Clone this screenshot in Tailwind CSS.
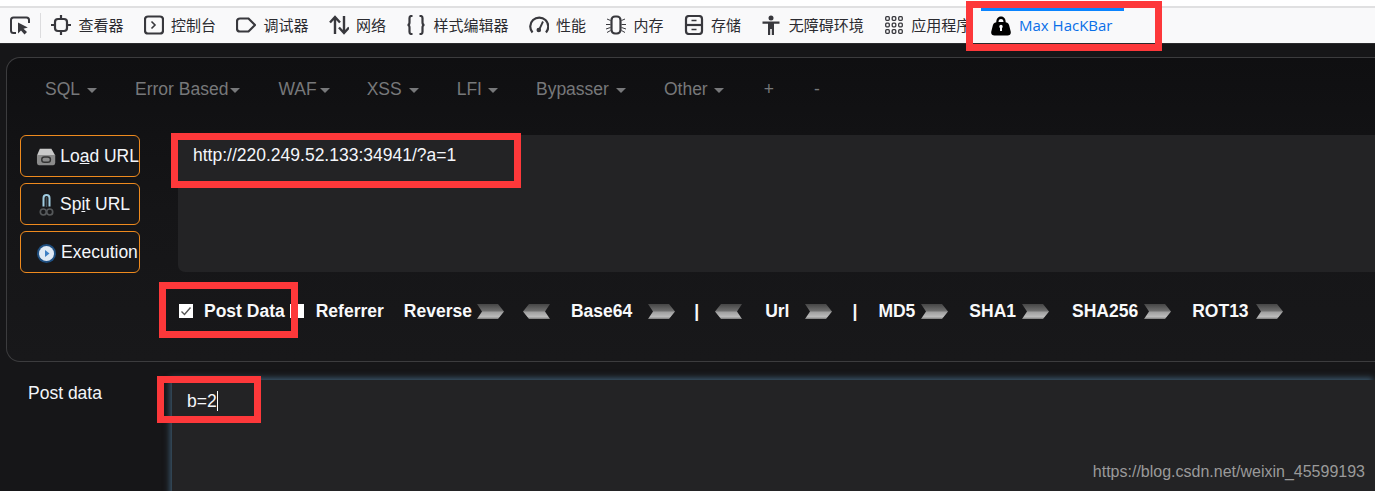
<!DOCTYPE html>
<html>
<head>
<meta charset="utf-8">
<script src="https://cdn.jsdelivr.net/npm/@tailwindcss/browser@4"></script>
</head>
<body class="m-0 overflow-hidden">
<div class="relative w-[1375px] h-[491px] overflow-hidden bg-[#161618] font-['Liberation_Sans','Noto_Sans_CJK_SC',sans-serif]">

  <!-- devtools toolbar -->
  <div class="h-[6px] bg-white"></div>
  <div class="h-[2px] bg-[#e0e0e1]"></div>
  <div class="relative flex h-[35px] items-center bg-[#f9f9fa] pb-[1px] text-[15px] text-[#2b2b30] font-['Noto_Sans_CJK_SC','Noto_Sans',sans-serif]">
    <svg class="ml-[10px] w-[20px] h-[20px] shrink-0" viewBox="0 0 20 20" fill="none" stroke="#38383d" stroke-width="2"><path d="M6 18H3.500Q1 18 1 15.500V5Q1 2.500 3.500 2.500H16.500Q19 2.500 19 5V8"/><path d="M8 7.500L8 18.500L11 15.500L14.500 19.500L17 17L13.500 13.800L17.800 12.500Z" fill="#38383d" stroke="none"/></svg>
    <div class="ml-[10px] mr-[10px] h-[25px] w-px bg-[#dcdcde]"></div>
    <div class="flex items-center gap-[20px]">
      <div class="flex items-center gap-[7.500px]"><svg class="w-[20px] h-[20px]" viewBox="0 0 20 20" fill="none" stroke="#38383d" stroke-width="2.200"><rect x="4" y="4" width="12" height="12" rx="3"/><path d="M10 0V4M10 16V20M0 10H4M16 10H20"/></svg><span>查看器</span></div>
      <div class="flex items-center gap-[7.500px]"><svg class="w-[20px] h-[20px]" viewBox="0 0 20 20" fill="none" stroke="#38383d" stroke-width="2.200"><rect x="1" y="1.500" width="18" height="17" rx="3"/><path d="M7.500 6.500L11 10L7.500 13.500" stroke-width="1.600"/></svg><span>控制台</span></div>
      <div class="flex items-center gap-[7.500px]"><svg class="w-[20px] h-[20px]" viewBox="0 0 20 20" fill="none" stroke="#38383d" stroke-width="2.200"><path d="M4 3.500H12.500L19 10L12.500 16.500H4Q1 16.500 1 13.500V6.500Q1 3.500 4 3.500Z"/></svg><span>调试器</span></div>
      <div class="flex items-center gap-[7.500px]"><svg class="w-[20px] h-[20px]" viewBox="0 0 20 20" fill="none" stroke="#38383d" stroke-width="2.400"><path d="M6 19V2M1 7.500L6 2L11 7.500"/><path d="M15 1V18M10 12.500L15 18L20 12.500"/></svg><span>网络</span></div>
      <div class="flex items-center gap-[7.500px]"><svg class="w-[20px] h-[20px]" viewBox="0 0 20 20" fill="none" stroke="#38383d" stroke-width="2.200"><path d="M6.500 1H5.500Q3.500 1 3.500 3V7.500Q3.500 10 1.500 10Q3.500 10 3.500 12.500V17Q3.500 19 5.500 19H6.500"/><path d="M13.500 1H14.500Q16.500 1 16.500 3V7.500Q16.500 10 18.500 10Q16.500 10 16.500 12.500V17Q16.500 19 14.500 19H13.500"/></svg><span>样式编辑器</span></div>
      <div class="flex items-center gap-[7.500px]"><svg class="w-[20px] h-[20px]" viewBox="0 0 20 20" fill="none" stroke="#38383d" stroke-width="2.200"><path d="M3.500 17.500A9 9 0 1 1 17 17.500"/><path d="M14 6.500L10.500 14" stroke-width="1.800"/><circle cx="9.800" cy="15" r="2.300" fill="#38383d" stroke="none"/></svg><span>性能</span></div>
      <div class="flex items-center gap-[7.500px]"><svg class="w-[20px] h-[20px]" viewBox="0 0 20 20" fill="none" stroke="#38383d"><rect x="5.500" y="1.500" width="9" height="17" rx="3.500" stroke-width="2.200"/><path d="M1 4L4.500 5.500M0 9.500H4.500M0 14L4.500 12.500M1 17.500L4.500 15.500M19 4L15.500 5.500M20 9.500H15.500M20 14L15.500 12.500M19 17.500L15.500 15.500" stroke-width="1"/></svg><span>内存</span></div>
      <div class="flex items-center gap-[7.500px]"><svg class="w-[20px] h-[20px]" viewBox="0 0 20 20" fill="none" stroke="#38383d" stroke-width="2.200"><rect x="2" y="1" width="16" height="18" rx="3"/><path d="M2 10H18"/><path d="M7.500 5.500H12.500M7.500 14.500H12.500" stroke-width="1.500"/></svg><span>存储</span></div>
      <div class="flex items-center gap-[7.500px]"><svg class="w-[20px] h-[20px]" viewBox="0 0 20 20" fill="#38383d"><circle cx="10" cy="3" r="2.500"/><path d="M1.500 6.500H18.500V8.800H13V20H10.800V14H9.200V20H7V8.800H1.500Z"/></svg><span>无障碍环境</span></div>
      <div class="flex items-center gap-[7.500px]"><svg class="w-[20px] h-[20px]" viewBox="0 0 20 20" fill="none" stroke="#38383d" stroke-width="1.300"><rect x="1.700" y="1.700" width="3.600" height="3.600" rx="1"/><rect x="8.200" y="1.700" width="3.600" height="3.600" rx="1"/><rect x="14.700" y="1.700" width="3.600" height="3.600" rx="1"/><rect x="1.700" y="8.200" width="3.600" height="3.600" rx="1"/><rect x="8.200" y="8.200" width="3.600" height="3.600" rx="1"/><rect x="14.700" y="8.200" width="3.600" height="3.600" rx="1"/><rect x="1.700" y="14.700" width="3.600" height="3.600" rx="1"/><rect x="8.200" y="14.700" width="3.600" height="3.600" rx="1"/><rect x="14.700" y="14.700" width="3.600" height="3.600" rx="1"/></svg><span>应用程序</span></div>
    </div>
    <div class="absolute left-[981px] top-0 flex h-full w-[143px] items-center gap-[8px] bg-[#f9f9fa] pb-[3px] pl-[10px] text-[#0a6fe8] border-t-[3px] border-[#0a84ff] font-['Open_Sans',sans-serif] text-[15px]">
      <svg class="w-[20px] h-[20px]" viewBox="0 0 20 20"><path fill-rule="evenodd" fill="#000" d="M10 0.500C6.800 0.500 5.300 3 5.300 6.300C2.800 7 2.200 8 1.800 9.500L0.300 15.500C-0.200 18 1 19.500 3.500 19.500H16.500C19 19.500 20.200 18 19.700 15.500L18.200 9.500C17.800 8 17.200 7 14.700 6.300C14.700 3 13.200 0.500 10 0.500ZM10 3C11.700 3 12.400 4.300 12.500 5.900H7.500C7.600 4.300 8.300 3 10 3ZM8.300 10.500A1.700 1.700 0 0 1 11.700 10.500Q11.700 11.500 11 12V15H9V12Q8.300 11.500 8.300 10.500Z"/></svg>
      <span>Max HacKBar</span>
    </div>
  </div>
  <div class="h-px bg-[#2a2a2c]"></div>

  <!-- hackbar panel -->
  <div class="ml-[6px] mt-[13px] h-[305px] rounded-l-[14px] border border-r-0 border-[#3c3c3e] bg-linear-to-b from-[#0f0f11] via-[#151517] to-[#18181a] text-[17.500px]">
    <div class="flex h-[62px] items-center gap-[38px] pl-[38px] text-[#77787a]">
      <div class="flex items-center">SQL<i class="ml-[7px] mt-[2px] border-x-[5px] border-t-[5px] border-x-transparent border-t-[#77787a]"></i></div>
      <div class="flex items-center">Error Based<i class="ml-[2px] mt-[2px] border-x-[5px] border-t-[5px] border-x-transparent border-t-[#77787a]"></i></div>
      <div class="flex items-center">WAF<i class="ml-[3px] mt-[2px] border-x-[5px] border-t-[5px] border-x-transparent border-t-[#77787a]"></i></div>
      <div class="-ml-[1px] flex items-center">XSS<i class="ml-[7px] mt-[2px] border-x-[5px] border-t-[5px] border-x-transparent border-t-[#77787a]"></i></div>
      <div class="flex items-center">LFI<i class="ml-[6px] mt-[2px] border-x-[5px] border-t-[5px] border-x-transparent border-t-[#77787a]"></i></div>
      <div class="flex items-center">Bypasser<i class="ml-[7px] mt-[2px] border-x-[5px] border-t-[5px] border-x-transparent border-t-[#77787a]"></i></div>
      <div class="flex items-center">Other<i class="ml-[6px] mt-[2px] border-x-[5px] border-t-[5px] border-x-transparent border-t-[#77787a]"></i></div>
      <div class="ml-[2px]">+</div>
      <div class="ml-[2px]">-</div>
    </div>
    <div class="mt-[15px] flex pl-[13px]">
      <div class="flex w-[120px] shrink-0 flex-col gap-[6px] text-[#f4f6fa]">
        <button class="flex h-[42px] items-center whitespace-nowrap rounded-[6px] border border-[#ee8a1e] bg-[#18181a] pl-[15px]">
          <svg class="mr-[4px] mt-[2px] w-[21px] h-[18px]" viewBox="0 0 21 18"><path d="M4 0.500H16L20 7.500H1Z" fill="#c9c9c9"/><path d="M1 7H20V15Q20 17.500 18 17.500H3Q1 17.500 1 15Z" fill="#8c8c8c"/><rect x="6" y="9" width="9" height="5.500" rx="2.700" fill="none" stroke="#333" stroke-width="1.500"/></svg>
          <span>Lo<u>a</u>d URL</span>
        </button>
        <button class="flex h-[42px] items-center whitespace-nowrap rounded-[6px] border border-[#ee8a1e] bg-[#18181a] pl-[18px]">
          <svg class="mr-[6px] mt-[2px] w-[15px] h-[23px]" viewBox="0 0 15 23" fill="none"><path d="M4.500 12.500V4Q4.500 1 7.500 1Q10.500 1 10.500 4V12.500" stroke="#9fcbe0" stroke-width="2"/><path d="M7.500 3V13" stroke="#3f4a52" stroke-width="1.500"/><circle cx="4.300" cy="18" r="3" stroke="#55585a" stroke-width="1.700"/><circle cx="10.700" cy="18" r="3" stroke="#55585a" stroke-width="1.700"/></svg>
          <span>Sp<u>i</u>t URL</span>
        </button>
        <button class="flex h-[42px] items-center whitespace-nowrap rounded-[6px] border border-[#ee8a1e] bg-[#18181a] pl-[15px]">
          <svg class="mr-[4px] mt-[2px] w-[21px] h-[21px]" viewBox="0 0 21 21"><circle cx="10.500" cy="10.500" r="9.500" fill="#1f4f80"/><circle cx="10.500" cy="10.500" r="7.500" fill="#dfe9f4"/><path d="M9 7L13.500 10.500L9 14Z" fill="#3f80c4"/></svg>
          <span>Execution</span>
        </button>
      </div>
      <div class="ml-[38px] h-[137px] flex-1 rounded-l-[7px] bg-[#232325] pl-[15px] pt-[10px] leading-[21px] text-[#f4f6fa]">http://220.249.52.133:34941/?a=1</div>
    </div>
    <div class="mt-[29px] flex h-[18px] items-center whitespace-nowrap font-bold text-[#f8f9fb]">
      <span class="ml-[172px] flex h-[14px] w-[14px] items-center justify-center bg-white"><svg class="w-[12px] h-[12px]" viewBox="0 0 12 12" fill="none" stroke="#555" stroke-width="1.400"><path d="M1.500 6.500L4.500 9.500L10.500 2.500"/></svg></span>
      <span class="ml-[11px]">Post Data</span>
      <span class="ml-[5px] h-[14px] w-[14px] bg-white"></span>
      <span class="ml-[12px]">Referrer</span>
      <span class="ml-[20px]">Reverse</span>
      <svg class="ml-[5px] w-[27px] h-[15px]" viewBox="0 0 27 15"><defs><linearGradient id="ar" x1="0" y1="0" x2="0" y2="1"><stop offset="0" stop-color="#454545"/><stop offset=".45" stop-color="#6e6e6e"/><stop offset=".55" stop-color="#a0a0a0"/><stop offset=".85" stop-color="#bcbcbc"/><stop offset="1" stop-color="#7a7a7a"/></linearGradient></defs><path d="M0 0H21L27 7.500L21 15H0L5 7.500Z" fill="url(#ar)"/></svg>
      <svg class="ml-[19px] w-[27px] h-[15px]" viewBox="0 0 27 15"><path d="M27 0H6L0 7.500L6 15H27L22 7.500Z" fill="url(#ar)"/></svg>
      <span class="ml-[21px]">Base64</span>
      <svg class="ml-[16px] w-[27px] h-[15px]" viewBox="0 0 27 15"><path d="M0 0H21L27 7.500L21 15H0L5 7.500Z" fill="url(#ar)"/></svg>
      <span class="ml-[19px]">|</span>
      <svg class="ml-[16px] w-[27px] h-[15px]" viewBox="0 0 27 15"><path d="M27 0H6L0 7.500L6 15H27L22 7.500Z" fill="url(#ar)"/></svg>
      <span class="ml-[23px]">Url</span>
      <svg class="ml-[16px] w-[27px] h-[15px]" viewBox="0 0 27 15"><path d="M0 0H21L27 7.500L21 15H0L5 7.500Z" fill="url(#ar)"/></svg>
      <span class="ml-[20px]">|</span>
      <span class="ml-[21px]">MD5</span>
      <svg class="ml-[6px] w-[27px] h-[15px]" viewBox="0 0 27 15"><path d="M0 0H21L27 7.500L21 15H0L5 7.500Z" fill="url(#ar)"/></svg>
      <span class="ml-[21px]">SHA1</span>
      <svg class="ml-[6px] w-[27px] h-[15px]" viewBox="0 0 27 15"><path d="M0 0H21L27 7.500L21 15H0L5 7.500Z" fill="url(#ar)"/></svg>
      <span class="ml-[23px]">SHA256</span>
      <svg class="ml-[6px] w-[27px] h-[15px]" viewBox="0 0 27 15"><path d="M0 0H21L27 7.500L21 15H0L5 7.500Z" fill="url(#ar)"/></svg>
      <span class="ml-[21px]">ROT13</span>
      <svg class="ml-[7px] w-[27px] h-[15px]" viewBox="0 0 27 15"><path d="M0 0H21L27 7.500L21 15H0L5 7.500Z" fill="url(#ar)"/></svg>
    </div>
  </div>

  <!-- post data -->
  <div class="mt-[18px] flex text-[17.500px] text-[#f4f6fa]">
    <div class="ml-[28px] mt-[3px] w-[144px] shrink-0 leading-[21px]">Post data</div>
    <div class="h-[120px] flex-1 bg-[#232325] pl-[15px] pt-[11px] leading-[21px] shadow-[-2px_-2px_6px_#3d5a70]">b=2<span class="inline-block h-[20px] w-px bg-white align-[-4px]"></span></div>
  </div>

  <div class="absolute right-[10px] top-[462px] text-[16px] leading-[20px] text-[#9a9a9a]">https://blog.csdn.net/weixin_45599193</div>

  <!-- red annotation boxes -->
  <div class="absolute left-[966px] top-[1px] h-[50px] w-[196px] border-[7px] border-[#fd383a]"></div>
  <div class="absolute left-[171px] top-[133px] h-[55px] w-[350px] border-[7px] border-[#fd383a]"></div>
  <div class="absolute left-[159px] top-[282px] h-[56px] w-[139px] border-[7px] border-[#fd383a]"></div>
  <div class="absolute left-[157px] top-[376px] h-[47px] w-[104px] border-[7px] border-[#fd383a]"></div>
</div>
</body>
</html>
